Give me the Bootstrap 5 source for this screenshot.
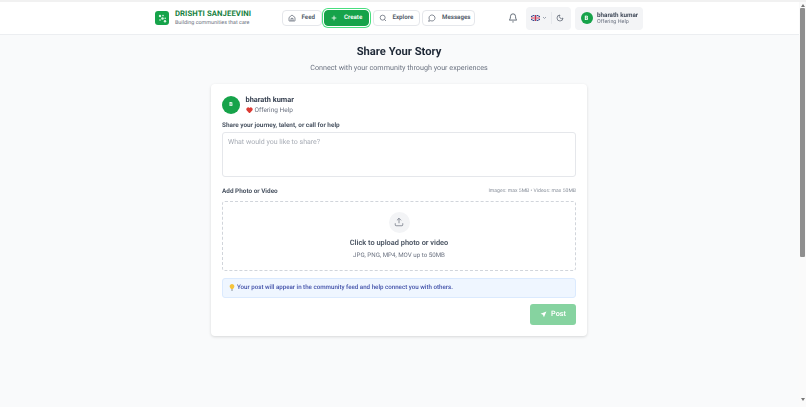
<!DOCTYPE html>
<html lang="en">
<head>
<meta charset="utf-8">
<title>Share Your Story</title>
<link href="https://cdn.jsdelivr.net/npm/bootstrap@5.3.0/dist/css/bootstrap.min.css" rel="stylesheet">
<style>
html,body{height:407px;overflow:hidden}
body{font-family:Roboto,"Liberation Sans",sans-serif;background:#f9fafb;color:#1f2937;font-size:7px;text-rendering:geometricPrecision}
.top-strip{height:2px;background:#f1f1f1}
.shell{height:405px}
.main-col{width:798px;will-change:opacity}
.fake-bar{width:7px;background:#fafafa;padding:2px 1px}
.fake-thumb{height:249px;width:5px;background:#8f8f8f;border-radius:1px;margin-top:1px}
.arrow-up,.arrow-down{width:0;height:0;border-left:2px solid transparent;border-right:2px solid transparent;margin-left:.5px}
.arrow-up{border-bottom:3px solid #777}
.arrow-down{border-top:3px solid #777}
.topnav{height:33px;background:#fff;border-bottom:1px solid #eceef1;padding-left:155px;width:799px}
.logo-box{width:14px;height:14px;border-radius:3px;background:#16a34a;margin-right:6px}
.brand-title{font-size:7.7px;line-height:10px;font-weight:700;color:#15803d;letter-spacing:.1px;white-space:nowrap}
.brand-sub{font-size:5.4px;line-height:8px;color:#6b7280;white-space:nowrap}
.brand-wrap{width:126.5px}
.nav-pill{height:16px;border:1px solid #e5e7eb;border-radius:4px;background:#fff;font-size:6.2px;font-weight:600;color:#4b5563;gap:6px;padding:0 0 0 5px}
.pill-feed{width:40px}.pill-create{width:45px;background:#16a34a;color:#fff;border-color:#16a34a;box-shadow:0 0 0 1px #fff,0 0 0 2px #4ade80}
.pill-explore{width:47px;margin-left:1px}.pill-msg{width:53px}
.nav-links{gap:2.5px}
.bell-wrap{margin-left:31px;width:13px}
.lang-group{width:45px;height:23px;background:#f3f4f6;border-radius:4px;margin-left:6.5px;padding-left:5px}
.lang-trigger{gap:2px}
.divider-v{width:1px;height:12px;background:#e5e7eb;margin-left:4px}
.moon-wrap{margin-left:4px}
.user-chip{width:68px;height:23px;background:#f3f4f6;border-radius:4px;margin-left:4px;padding-left:6px;gap:4.5px}
.ava-sm{width:12px;height:12px;background:#16a34a;border-radius:50%;color:#fff;font-size:6px;font-weight:700}
.chip-name{font-size:6.3px;line-height:8px;font-weight:600;color:#374151}
.chip-sub{font-size:5.4px;line-height:7px;color:#6b7280}
.page-head{padding-top:9px;height:49px}
.page-title{font-size:11.2px;line-height:16px;font-weight:700;color:#1f2937;margin:0}
.page-sub{font-size:7.2px;line-height:10px;color:#6b7280;margin:3px 0 0}
.post-card{width:376px;height:252px;margin:0 0 0 211px;background:#fff;border-radius:4px;box-shadow:0 1px 3px rgba(0,0,0,.14);padding:11px}
.ava-lg{width:18px;height:18px;border-radius:50%;background:#16a34a;color:#fff;font-size:5.5px;font-weight:700;margin-right:5.5px}
.user-name{font-size:7.4px;line-height:10px;font-weight:700;color:#374151}
.user-role{font-size:6.5px;line-height:9px;color:#6b7280;margin-top:.5px;gap:2px}
.field-label{font-size:6.4px;line-height:8px;font-weight:700;color:#4b5563}
.label-first{margin-top:6.5px}
.story-box{height:45.5px;border:1px solid #e5e7eb;border-radius:3px;padding:4px 5px;font-size:7px;color:#a8adb6;margin-top:2.5px;line-height:10px}
.add-row{margin-top:10px;height:8px}
.limits{font-size:5.1px;line-height:8px;color:#8a919c}
.drop-zone{height:70px;border:1px dashed #d1d5db;border-radius:3px;margin-top:5.7px;padding-top:10px}
.up-circle{width:21px;height:21px;border-radius:50%;background:#f3f4f6}
.drop-title{font-size:7.4px;line-height:10px;font-weight:600;color:#4b5563;margin-top:5px}
.drop-sub{font-size:6.2px;line-height:8px;color:#6b7280;margin-top:3px}
.note-box{height:20px;background:#eff6ff;border:1px solid #dbeafe;border-radius:3px;margin-top:7px;padding-left:6px;font-size:6.2px;font-weight:500;color:#3f4fa8;gap:2px}
.post-row{margin-top:6.5px}
.post-btn{width:46px;height:21px;background:#86d3a0;border-radius:3px;color:#fff;font-size:7.3px;font-weight:600;gap:4px}
</style>
</head>
<body>
<div class="top-strip"></div>
<div class="shell d-flex">
  <div class="main-col">
    <nav class="topnav d-flex align-items-center">
      <div class="brand-wrap d-flex align-items-center flex-shrink-0">
        <span class="logo-box d-flex align-items-center justify-content-center">
          <svg width="9" height="9" viewBox="0 0 9 9" fill="#d9f5e3"><circle cx="2" cy="2" r="1.2"/><circle cx="5" cy="1.6" r=".8"/><circle cx="4.5" cy="4.5" r="1.3"/><circle cx="7.2" cy="4.2" r=".8"/><circle cx="2" cy="6" r=".8"/><circle cx="7" cy="7.2" r="1.2"/></svg>
        </span>
        <div>
          <div class="brand-title">DRISHTI SANJEEVINI</div>
          <div class="brand-sub">Building communities that care</div>
        </div>
      </div>
      <div class="nav-links d-flex align-items-center flex-shrink-0">
        <a class="nav-pill pill-feed d-flex align-items-center text-decoration-none">
          <svg width="8" height="8" viewBox="0 0 24 24" fill="none" stroke="#4b5563" stroke-width="2"><path d="M3 10.5 12 3l9 7.5V20a1 1 0 0 1-1 1H4a1 1 0 0 1-1-1z"/><path d="M9 21v-8h6v8"/></svg>Feed</a>
        <a class="nav-pill pill-create d-flex align-items-center text-decoration-none">
          <svg width="8" height="8" viewBox="0 0 24 24" fill="none" stroke="#fff" stroke-width="2.4"><path d="M12 5v14M5 12h14"/></svg>Create</a>
        <a class="nav-pill pill-explore d-flex align-items-center text-decoration-none">
          <svg width="8" height="8" viewBox="0 0 24 24" fill="none" stroke="#4b5563" stroke-width="2"><circle cx="11" cy="11" r="7.5"/><path d="m21 21-4.5-4.5"/></svg>Explore</a>
        <a class="nav-pill pill-msg d-flex align-items-center text-decoration-none">
          <svg width="8" height="8" viewBox="0 0 24 24" fill="none" stroke="#4b5563" stroke-width="2"><path d="M7.9 20A9 9 0 1 0 4 16.1L2 22z"/></svg>Messages</a>
      </div>
      <div class="bell-wrap d-flex justify-content-center flex-shrink-0">
        <svg width="10" height="10" viewBox="0 0 24 24" fill="none" stroke="#4b5563" stroke-width="2"><path d="M6 8a6 6 0 0 1 12 0c0 7 3 9 3 9H3s3-2 3-9"/><path d="M10.3 21a2 2 0 0 0 3.4 0"/></svg>
      </div>
      <div class="lang-group d-flex align-items-center flex-shrink-0">
        <span class="lang-trigger d-flex align-items-center">
          <svg width="9" height="6" viewBox="0 0 9 6"><rect width="9" height="6" fill="#3b4a8c"/><path d="M0 0l9 6M9 0L0 6" stroke="#fff" stroke-width="1"/><path d="M4.5 0v6M0 3h9" stroke="#fff" stroke-width="2"/><path d="M4.5 0v6M0 3h9" stroke="#c8314a" stroke-width="1"/></svg>
          <svg width="5" height="4" viewBox="0 0 5 4" fill="none" stroke="#9ca3af"><path d="m1 1 1.5 1.5L4 1"/></svg>
        </span>
        <span class="divider-v"></span>
        <span class="moon-wrap d-flex">
          <svg width="8" height="8" viewBox="0 0 24 24" fill="none" stroke="#4b5563" stroke-width="2"><path d="M12 3a6 6 0 0 0 9 9 9 9 0 1 1-9-9z"/></svg>
        </span>
      </div>
      <div class="user-chip d-flex align-items-center flex-shrink-0">
        <span class="ava-sm d-flex align-items-center justify-content-center flex-shrink-0">B</span>
        <div class="text-nowrap">
          <div class="chip-name">bharath kumar</div>
          <div class="chip-sub">Offering Help</div>
        </div>
      </div>
    </nav>
    <header class="page-head text-center">
      <h1 class="page-title">Share Your Story</h1>
      <p class="page-sub">Connect with your community through your experiences</p>
    </header>
    <section class="post-card">
      <div class="d-flex align-items-center">
        <span class="ava-lg d-flex align-items-center justify-content-center flex-shrink-0">B</span>
        <div>
          <div class="user-name">bharath kumar</div>
          <div class="user-role d-flex align-items-center">
            <svg width="7" height="6.5" viewBox="0 0 24 22" fill="#dc3b34"><path d="M12 22 2 11a6.5 6.5 0 0 1 10-8 6.5 6.5 0 0 1 10 8z"/></svg><span>Offering Help</span>
          </div>
        </div>
      </div>
      <div class="field-label label-first">Share your journey, talent, or call for help</div>
      <div class="story-box">What would you like to share?</div>
      <div class="add-row d-flex justify-content-between align-items-center">
        <span class="field-label">Add Photo or Video</span>
        <span class="limits">Images: max 5MB • Videos: max 50MB</span>
      </div>
      <div class="drop-zone d-flex flex-column align-items-center">
        <span class="up-circle d-flex align-items-center justify-content-center">
          <svg width="10" height="10" viewBox="0 0 24 24" fill="none" stroke="#6b7280" stroke-width="1.8"><path d="M21 15v4a2 2 0 0 1-2 2H5a2 2 0 0 1-2-2v-4"/><path d="m17 8-5-5-5 5M12 3v12"/></svg>
        </span>
        <div class="drop-title">Click to upload photo or video</div>
        <div class="drop-sub">JPG, PNG, MP4, MOV up to 50MB</div>
      </div>
      <div class="note-box d-flex align-items-center">
        <svg width="6" height="7" viewBox="0 0 12 14"><path d="M6 0a4.6 4.6 0 0 0-2.6 8.4V10h5.2V8.4A4.6 4.6 0 0 0 6 0z" fill="#f5c33b"/><rect x="4" y="11" width="4" height="2" fill="#8a8f98"/></svg>
        <span>Your post will appear in the community feed and help connect you with others.</span>
      </div>
      <div class="post-row d-flex justify-content-end">
        <div class="post-btn d-flex align-items-center justify-content-center">
          <svg width="7" height="7" viewBox="0 0 24 24" fill="#fff"><path d="M22 2 2 9.5l8 3.5 3.5 8.5z"/></svg>Post
        </div>
      </div>
    </section>
  </div>
  <div class="fake-bar ms-auto d-flex flex-column">
    <div class="arrow-up"></div>
    <div class="fake-thumb"></div>
    <div class="arrow-down mt-auto mb-1"></div>
  </div>
</div>
</body>
</html>
